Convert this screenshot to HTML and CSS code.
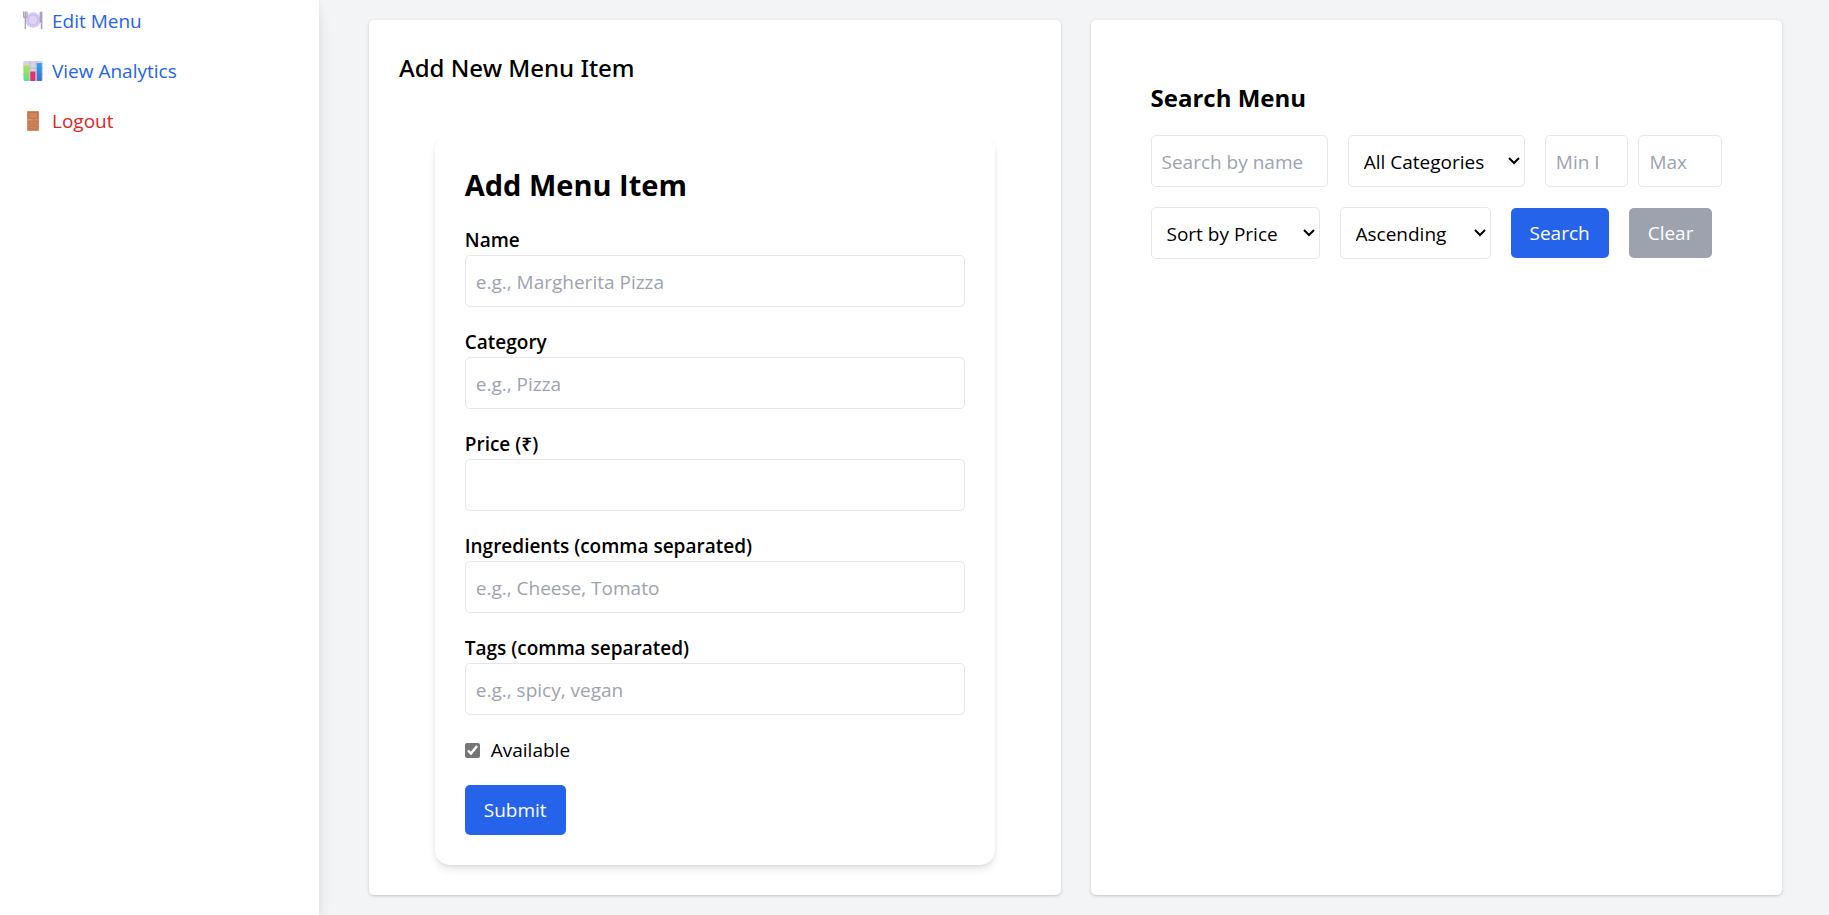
FILE: index.html
```html
<!DOCTYPE html>
<html lang="en">
<head>
<meta charset="utf-8">
<title>Edit Menu</title>
<link rel="stylesheet" href="styles.css">
</head>
<body>
<div class="layout">
  <nav class="sidebar">
    <a class="nav-link" href="#menu">
      <svg class="nav-icon" viewBox="0 0 20 20" aria-hidden="true">
        <circle cx="10" cy="9" r="7.800" fill="#d9caf3"/>
        <circle cx="10" cy="9" r="5" fill="#e0d2f7" stroke="#c8b7e8" stroke-width="1"/>
        <path d="M0.600 0.500v4.500q0 1.500 1.200 1.700M4 0.500v4.500q0 1.500-1.200 1.700M2.300 0.500v17.500" fill="none" stroke="#aaa0b8" stroke-width="1.300"/>
        <path d="M16.600 1.600q1.400-1.400 2.800-1.200V18h-1.600v-6.500h-1.200z" fill="#aaa0b8"/>
      </svg>
      <span>Edit Menu</span>
    </a>
    <a class="nav-link" href="#analytics">
      <svg class="nav-icon" viewBox="0 0 20 20" aria-hidden="true">
        <defs>
          <linearGradient id="bar-green" x1="0" y1="0" x2="0" y2="1"><stop offset="0" stop-color="#b5e04c"/><stop offset="1" stop-color="#54e58c"/></linearGradient>
          <linearGradient id="bar-blue" x1="0" y1="0" x2="0" y2="1"><stop offset="0" stop-color="#2fa4f4"/><stop offset="1" stop-color="#3a6fc6"/></linearGradient>
        </defs>
        <rect width="20" height="20" rx="2" fill="#d8d2e2"/>
        <path d="M0 7h20M0 13.500h20M7 0v20M13 0v20" stroke="#b9b2c6" stroke-width=".8"/>
        <rect x="1" y="4.500" width="5" height="15.500" rx=".6" fill="url(#bar-green)"/>
        <rect x="7.300" y="10.500" width="5" height="9.500" rx=".6" fill="#e62e72"/>
        <rect x="13.800" y="2" width="5" height="18" rx=".6" fill="url(#bar-blue)"/>
      </svg>
      <span>View Analytics</span>
    </a>
    <a class="nav-link nav-link-danger" href="#logout">
      <svg class="nav-icon" viewBox="0 0 20 20" aria-hidden="true">
        <rect x="4" y="0" width="12" height="20" rx=".8" fill="#d98a5e"/>
        <path d="M5.500 1.500h9v6h-9zM5.500 10h9v3h-9zM5.500 15h9v3.200h-9z" fill="#cc8660" stroke="#bd7048" stroke-width=".8"/>
        <path d="M4.500 8.800h4" stroke="#f0a15a" stroke-width="1"/>
      </svg>
      <span>Logout</span>
    </a>
  </nav>

  <main class="content">
    <section class="panel">
      <h2 class="panel-title">Add New Menu Item</h2>
      <form class="item-form">
        <h1 class="form-title">Add Menu Item</h1>
        <div class="field">
          <label class="label" for="name">Name</label>
          <input class="input" id="name" type="text" placeholder="e.g., Margherita Pizza">
        </div>
        <div class="field">
          <label class="label" for="category">Category</label>
          <input class="input" id="category" type="text" placeholder="e.g., Pizza">
        </div>
        <div class="field">
          <label class="label" for="price">Price (₹)</label>
          <input class="input" id="price" type="number">
        </div>
        <div class="field">
          <label class="label" for="ingredients">Ingredients (comma separated)</label>
          <input class="input" id="ingredients" type="text" placeholder="e.g., Cheese, Tomato">
        </div>
        <div class="field">
          <label class="label" for="tags">Tags (comma separated)</label>
          <input class="input" id="tags" type="text" placeholder="e.g., spicy, vegan">
        </div>
        <div class="check-row">
          <input class="checkbox" id="available" type="checkbox" checked>
          <label for="available">Available</label>
        </div>
        <button class="button" type="button">Submit</button>
      </form>
    </section>

    <section class="panel">
      <form class="search">
        <h2 class="search-title">Search Menu</h2>
        <div class="search-filters">
          <input class="input" type="text" placeholder="Search by name" aria-label="Search by name">
          <select class="input select" aria-label="Category"><option>All Categories</option></select>
          <div class="price-range">
            <input class="input input-price" type="number" placeholder="Min Price" aria-label="Min Price">
            <input class="input input-price" type="number" placeholder="Max Price" aria-label="Max Price">
          </div>
        </div>
        <div class="search-actions">
          <select class="input select select-sort" aria-label="Sort by"><option>Sort by Price</option></select>
          <select class="input select select-order" aria-label="Order"><option>Ascending</option></select>
          <button class="button" type="button">Search</button>
          <button class="button button-muted" type="reset">Clear</button>
        </div>
      </form>
    </section>
  </main>
</div>
</body>
</html>
```
FILE: styles.css
```css
*, *::before, *::after { box-sizing: border-box; }

body {
  margin: 0;
  background: #f3f4f6;
  color: #000;
  font-family: "Open Sans", "Noto Sans", sans-serif;
  font-size: 19px;
  line-height: 30px;
}

h1, h2 { margin: 0; }

input, select, button {
  font: inherit;
  color: inherit;
  margin: 0;
}

.layout {
  display: flex;
  min-height: 100vh;
}

.sidebar {
  flex: none;
  width: 319px;
  padding: 6px 23px;
  display: flex;
  flex-direction: column;
  gap: 20px;
  background: #fff;
  box-shadow: 0 12px 20px -4px rgba(0, 0, 0, .1), 0 0 8px rgba(0, 0, 0, .06);
}

.nav-link {
  display: flex;
  align-items: center;
  gap: 9px;
  color: #2563eb;
  text-decoration: none;
}

.nav-link-danger { color: #dc2626; }

.nav-icon {
  flex: none;
  width: 20px;
  height: 20px;
}

.content {
  flex: 1;
  display: grid;
  grid-template-columns: repeat(2, minmax(0, 1fr));
  gap: 30px;
  padding: 20px 47px 20px 50px;
}

.panel {
  padding: 30px;
  background: #fff;
  border-radius: 5px;
  box-shadow: 0 1px 4px rgba(0, 0, 0, .1), 0 1px 2px rgba(0, 0, 0, .1);
}

.panel-title {
  margin-bottom: 50px;
  font-family: "Noto Sans", "Open Sans", sans-serif;
  font-size: 24px;
  line-height: 35px;
  font-weight: 500;
}

.item-form {
  display: flex;
  flex-direction: column;
  align-items: flex-start;
  gap: 20px;
  max-width: 560px;
  margin: 0 auto;
  padding: 30px;
  background: #fff;
  border-radius: 15px;
  box-shadow: 0 5px 8px -1px rgba(0, 0, 0, .1), 0 2px 5px -2px rgba(0, 0, 0, .1);
}

.form-title {
  font-size: 29px;
  line-height: 40px;
  font-weight: 700;
}

.field {
  display: flex;
  flex-direction: column;
  width: 100%;
}

.label { font-weight: 600; }

.input {
  width: 100%;
  height: 52px;
  padding: 11px 10px 9px;
  background: #fff;
  border: 1px solid #e5e7eb;
  border-radius: 5px;
}

.input::placeholder {
  color: #9ca3af;
  opacity: 1;
}

.input-price { padding-right: 14px; }

.select {
  appearance: none;
  padding: 11px 24px 9px 15px;
  background: #fff url("data:image/svg+xml,%3Csvg xmlns='http://www.w3.org/2000/svg' width='12' height='8' viewBox='0 0 12 8'%3E%3Cpath d='M1 1l5 5 5-5' fill='none' stroke='black' stroke-width='2'/%3E%3C/svg%3E") no-repeat right 4px center;
}

.check-row {
  display: flex;
  align-items: center;
  gap: 11px;
}

.checkbox {
  width: 15px;
  height: 15px;
  accent-color: #767676;
}

.button {
  height: 50px;
  padding: 10px 19px;
  background: #2563eb;
  color: #fff;
  border: 0;
  border-radius: 5px;
}

.button-muted { background: #9ca3af; }

.search {
  display: flex;
  flex-direction: column;
  gap: 20px;
  padding: 30px;
}

.search-title {
  font-size: 24px;
  line-height: 35px;
  font-weight: 700;
}

.search-filters {
  display: grid;
  grid-template-columns: repeat(3, minmax(0, 1fr));
  gap: 20px;
}

.price-range {
  display: flex;
  gap: 10px;
}

.search-actions {
  display: flex;
  flex-wrap: wrap;
  align-items: center;
  gap: 20px;
}

.select-sort { width: 169px; }

.select-order { width: 151px; }
```
